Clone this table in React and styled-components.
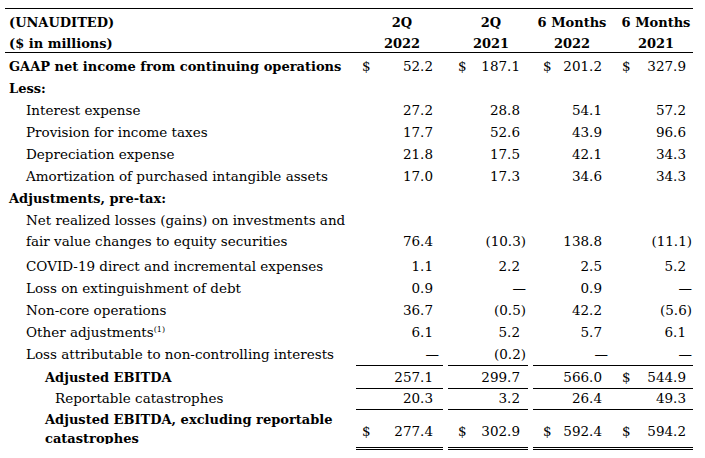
import React from 'react';
import styled, { createGlobalStyle } from 'styled-components';

const GlobalStyle = createGlobalStyle`
  body {
    margin: 0;
    background: #fff;
    color: #000;
    font-family: "DejaVu Serif", "Liberation Serif", serif;
    font-size: 13.5px;
  }
`;

// column widths: label, 2Q 2022, 2Q 2021, 6M 2022, 6M 2021
const COLS = '351px 87px 85px 85px 80px';

// per numeric column: gap before the cell, left pad ($ sign), right pad (paren edge), header shift
const NUM_COL = [
  { gap: 0, pl: 6, pr: 4, shift: 5 },
  { gap: 5, pl: 10, pr: 2, shift: 6 },
  { gap: 5, pl: 10, pr: 5, shift: -2 },
  { gap: 0, pl: 9, pr: 1, shift: 6 },
];

const Sheet = styled.div`
  padding: 8px 0 0 5px;
`;

const Table = styled.div`
  width: 688px;
  border-top: 1px solid #000;
`;

const Head = styled.div`
  display: grid;
  grid-template-columns: ${COLS};
  height: 44px;
  box-sizing: border-box;
  border-bottom: 1px solid #000;
  font-weight: bold;
  font-size: 13px;
  line-height: 21px;
`;

const HeadLabel = styled.div`
  padding: 3px 0 0 4px;
`;

const HeadCell = styled.div`
  padding-top: 3px;
  text-align: center;
  white-space: nowrap;
  margin-left: ${p => NUM_COL[p.$col].gap}px;
  padding-left: ${p => Math.max(NUM_COL[p.$col].shift, 0)}px;
  padding-right: ${p => Math.max(-NUM_COL[p.$col].shift, 0)}px;
`;

const Row = styled.div`
  display: grid;
  grid-template-columns: ${COLS};
  height: ${p => p.$h}px;
  line-height: 21px;
`;

const Label = styled.div`
  padding: 3px 0 0 ${p => p.$indent}px;
  font-weight: ${p => (p.$bold ? 'bold' : 'normal')};
  font-size: ${p => (p.$bold ? 13 : 13.5)}px;
  ${p => p.$clip && `height: ${p.$clip}px; overflow: hidden; box-sizing: border-box; line-height: 19px;`}

  sup {
    font-size: 8px;
    line-height: 0;
    vertical-align: 5px;
  }
`;

const Num = styled.div`
  display: flex;
  justify-content: space-between;
  align-items: flex-start;
  box-sizing: border-box;
  margin-left: ${p => NUM_COL[p.$col].gap}px;
  padding: ${p => p.$top}px ${p => NUM_COL[p.$col].pr}px 0 ${p => NUM_COL[p.$col].pl}px;
  border-bottom: ${p =>
    p.$rule === 'double' ? '3px double #000' : p.$rule === 'single' ? '1px solid #000' : 'none'};
`;

const Value = styled.span`
  padding-right: ${p => (p.$hang ? 0 : 6)}px;
`;

const heads = [
  ['2Q', '2022'],
  ['2Q', '2021'],
  ['6 Months', '2022'],
  ['6 Months', '2021'],
];

const rows = [
  { label: 'GAAP net income from continuing operations', bold: true, indent: 4, vals: ['52.2', '187.1', '201.2', '327.9'], dollars: [1, 1, 1, 1] },
  { label: 'Less:', bold: true, indent: 4 },
  { label: 'Interest expense', indent: 21, vals: ['27.2', '28.8', '54.1', '57.2'] },
  { label: 'Provision for income taxes', indent: 21, vals: ['17.7', '52.6', '43.9', '96.6'] },
  { label: 'Depreciation expense', indent: 21, vals: ['21.8', '17.5', '42.1', '34.3'] },
  { label: 'Amortization of purchased intangible assets', indent: 21, vals: ['17.0', '17.3', '34.6', '34.3'] },
  { label: 'Adjustments, pre-tax:', bold: true, indent: 4 },
  { label: 'Net realized losses (gains) on investments and fair value changes to equity securities', indent: 21, h: 46, top: 24, vals: ['76.4', '(10.3)', '138.8', '(11.1)'] },
  { label: 'COVID-19 direct and incremental expenses', indent: 21, vals: ['1.1', '2.2', '2.5', '5.2'] },
  { label: 'Loss on extinguishment of debt', indent: 21, vals: ['0.9', '—', '0.9', '—'] },
  { label: 'Non-core operations', indent: 21, vals: ['36.7', '(0.5)', '42.2', '(5.6)'] },
  { label: 'Other adjustments', sup: '(1)', indent: 21, vals: ['6.1', '5.2', '5.7', '6.1'] },
  { label: 'Loss attributable to non-controlling interests', indent: 21, h: 23, rule: 'single', vals: ['—', '(0.2)', '—', '—'] },
  { label: 'Adjusted EBITDA', bold: true, indent: 40, h: 21, rule: 'single', vals: ['257.1', '299.7', '566.0', '544.9'], dollars: [0, 0, 0, 1] },
  { label: 'Reportable catastrophes', indent: 50, h: 22, rule: 'single', vals: ['20.3', '3.2', '26.4', '49.3'] },
  { label: 'Adjusted EBITDA, excluding reportable catastrophes', bold: true, indent: 40, h: 43, top: 14, clip: 37, rule: 'double', vals: ['277.4', '302.9', '592.4', '594.2'], dollars: [1, 1, 1, 1] },
];

export default function App() {
  return (
    <Sheet>
      <GlobalStyle />
      <Table>
        <Head>
          <HeadLabel>
            (UNAUDITED)
            <br />
            ($ in millions)
          </HeadLabel>
          {heads.map(([a, b], i) => (
            <HeadCell key={i} $col={i}>
              {a}
              <br />
              {b}
            </HeadCell>
          ))}
        </Head>
        {rows.map((r, ri) => (
          <Row key={ri} $h={r.h || 22}>
            <Label $indent={r.indent} $bold={r.bold} $clip={r.clip}>
              {r.label}
              {r.sup && <sup>{r.sup}</sup>}
            </Label>
            {[0, 1, 2, 3].map(ci => {
              const v = r.vals ? r.vals[ci] : '';
              const hang = v.startsWith('(') || v === '—';
              return (
                <Num key={ci} $col={ci} $top={r.top || 3} $rule={r.rule}>
                  <span>{r.dollars && r.dollars[ci] ? '$' : ''}</span>
                  <Value $hang={hang}>{v}</Value>
                </Num>
              );
            })}
          </Row>
        ))}
      </Table>
    </Sheet>
  );
}
